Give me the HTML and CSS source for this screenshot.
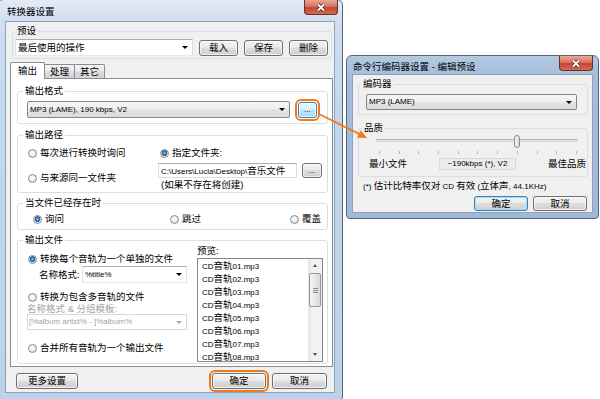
FILE: index.html
```html
<!DOCTYPE html>
<html lang="zh-CN">
<head>
    <meta charset="UTF-8">
    <meta name="viewport" content="width=device-width, initial-scale=1.0">
    <title>转换器设置</title>
    <link rel="stylesheet" href="styles.css">
</head>
<body>
<div class="desktop">

    <!-- main dialog -->
    <div class="win win-main">
        <div class="titlebar">
            <span class="title">转换器设置</span>
            <span class="close">
                <svg width="10" height="9" viewBox="0 0 10 9"><path d="M2 1.5l6 6M8 1.5l-6 6" stroke="#4a2620" stroke-width="3.4"/><path d="M2 1.5l6 6M8 1.5l-6 6" stroke="#fff" stroke-width="1.8"/></svg>
            </span>
        </div>
        <div class="client">
            <fieldset class="group preset">
                <legend>预设</legend>
                <div class="group-body row">
                    <div class="combo edit">最后使用的操作<i class="caret"></i></div>
                    <button class="btn">载入</button>
                    <button class="btn">保存</button>
                    <button class="btn">删除</button>
                </div>
            </fieldset>

            <div class="tabs">
                <div class="tabstrip">
                    <span class="tab active">输出</span>
                    <span class="tab">处理</span>
                    <span class="tab">其它</span>
                </div>
                <div class="tabpanel">
                    <fieldset class="group g-format">
                        <legend>输出格式</legend>
                        <div class="group-body row">
                            <div class="combo list"><span class="en">MP3 (LAME), 190 kbps, V2</span><i class="caret"></i></div>
                            <button class="btn dots hover marked"><span class="en">...</span></button>
                        </div>
                    </fieldset>

                    <fieldset class="group g-path">
                        <legend>输出路径</legend>
                        <div class="group-body">
                            <div class="path-left">
                                <label class="radio"><i></i>每次进行转换时询问</label>
                                <label class="radio"><i></i>与来源同一文件夹</label>
                            </div>
                            <div class="path-right">
                                <label class="radio on"><i></i>指定文件夹:</label>
                                <div class="path-row">
                                    <div class="textbox"><span class="en">C:\Users\Lucia\Desktop\</span>音乐文件</div>
                                    <button class="btn dots"><span class="en">...</span></button>
                                </div>
                                <div class="hint">(如果不存在将创建)</div>
                            </div>
                        </div>
                    </fieldset>

                    <fieldset class="group g-exist">
                        <legend>当文件已经存在时</legend>
                        <div class="group-body">
                            <label class="radio on"><i></i>询问</label>
                            <label class="radio"><i></i>跳过</label>
                            <label class="radio"><i></i>覆盖</label>
                        </div>
                    </fieldset>

                    <fieldset class="group g-files">
                        <legend>输出文件</legend>
                        <div class="group-body">
                            <div class="files-left">
                                <label class="radio on"><i></i>转换每个音轨为一个单独的文件</label>
                                <div class="name-row">
                                    <span class="name-label">名称格式:</span>
                                    <div class="combo edit"><span class="en">%title%</span><i class="caret"></i></div>
                                </div>
                                <label class="radio second"><i></i>转换为包含多音轨的文件</label>
                                <div class="sub-label">名称格式 &amp; 分组模板:</div>
                                <div class="combo off"><span class="en">[%album artist% - ]%album%</span><i class="caret"></i></div>
                                <label class="radio third"><i></i>合并所有音轨为一个输出文件</label>
                            </div>
                            <div class="preview">
                                <div>预览:</div>
                                <div class="listbox">
                                    <ul>
                                        <li><span class="en">CD</span>音轨<span class="en">01.mp3</span></li>
                                        <li><span class="en">CD</span>音轨<span class="en">02.mp3</span></li>
                                        <li><span class="en">CD</span>音轨<span class="en">03.mp3</span></li>
                                        <li><span class="en">CD</span>音轨<span class="en">04.mp3</span></li>
                                        <li><span class="en">CD</span>音轨<span class="en">05.mp3</span></li>
                                        <li><span class="en">CD</span>音轨<span class="en">06.mp3</span></li>
                                        <li><span class="en">CD</span>音轨<span class="en">07.mp3</span></li>
                                        <li><span class="en">CD</span>音轨<span class="en">08.mp3</span></li>
                                    </ul>
                                    <div class="scrollbar">
                                        <span class="sb-btn"><i class="up"></i></span>
                                        <span class="sb-thumb"><i></i><i></i><i></i></span>
                                        <span class="sb-track"></span>
                                        <span class="sb-btn"><i class="down"></i></span>
                                    </div>
                                </div>
                            </div>
                        </div>
                    </fieldset>
                </div>
            </div>

            <div class="footer">
                <button class="btn btn-more">更多设置</button>
                <button class="btn btn-ok marked">确定</button>
                <button class="btn btn-cancel">取消</button>
            </div>
        </div>
    </div>

    <!-- encoder preset dialog -->
    <div class="win win-sub">
        <div class="titlebar">
            <span class="title">命令行编码器设置 - 编辑预设</span>
            <span class="close">
                <svg width="10" height="9" viewBox="0 0 10 9"><path d="M2 1.5l6 6M8 1.5l-6 6" stroke="#4a2620" stroke-width="3.4"/><path d="M2 1.5l6 6M8 1.5l-6 6" stroke="#fff" stroke-width="1.8"/></svg>
            </span>
        </div>
        <div class="client">
            <fieldset class="group g-encoder">
                <legend>编码器</legend>
                <div class="group-body">
                    <div class="combo list"><span class="en">MP3 (LAME)</span><i class="caret"></i></div>
                </div>
            </fieldset>

            <fieldset class="group g-quality">
                <legend>品质</legend>
                <div class="group-body">
                    <div class="slider">
                        <span class="track"></span>
                        <span class="thumb" style="left: 70%"></span>
                    </div>
                    <div class="ticks">
                        <i></i><i></i><i></i><i></i><i></i><i></i><i></i><i></i><i></i><i></i><i></i>
                    </div>
                    <div class="scale-row">
                        <span>最小文件</span>
                        <span class="value en">~190kbps (*), V2</span>
                        <span>最佳品质</span>
                    </div>
                </div>
            </fieldset>

            <div class="note"><span class="en">(*) </span>估计比特率仅对<span class="en"> CD </span>有效<span class="en"> (</span>立体声<span class="en">, 44.1KHz)</span></div>

            <div class="sub-buttons">
                <button class="btn default">确定</button>
                <button class="btn">取消</button>
            </div>
        </div>
    </div>

    <svg class="arrow" width="600" height="399" viewBox="0 0 600 399">
        <line x1="319" y1="114" x2="360" y2="134.4" stroke="#f27a1c" stroke-width="1.8"/>
        <polygon points="367,138 357,137.8 360.8,130.3" fill="#f27a1c"/>
    </svg>
</div>
</body>
</html>
```

FILE: styles.css
```css
* {
    box-sizing: border-box;
}

body {
    margin: 0;
    background-color: #fff;
    font-family: "Liberation Sans", "Noto Sans CJK SC", sans-serif;
    font-size: 9.5px;
    line-height: 12px;
    color: #000;
}

.desktop {
    position: relative;
    width: 600px;
    height: 399px;
    overflow: hidden;
}

.en {
    font-size: 8px;
}

/* window frames */
.win {
    position: absolute;
    display: flex;
    flex-direction: column;
    border: 1px solid #56647a;
    border-radius: 6px 6px 4px 4px;
}

.win-main {
    left: -3px;
    top: -1px;
    width: 346px;
    height: 402px;
    background: linear-gradient(#e3ebf5, #cfdef0 22px, #c3d7ed 120px, #bcd2ea);
}

.win-sub {
    left: 346px;
    top: 55px;
    width: 253px;
    height: 164px;
    background: linear-gradient(#b4c9e2, #a4bddb 20px, #9fb9d8);
}

.titlebar {
    display: flex;
    justify-content: space-between;
    align-items: flex-start;
    flex-shrink: 0;
}

.win-main .titlebar {
    height: 21px;
    padding: 0 4px 0 9px;
}

.win-main .title {
    padding-top: 6px;
}

.win-sub .titlebar {
    height: 18px;
    padding: 0 5px 0 6px;
}

.win-sub .title {
    padding-top: 5px;
}

.close {
    width: 34px;
    height: 15px;
    display: flex;
    align-items: center;
    justify-content: center;
    border: 1px solid #6e2b20;
    border-top: none;
    border-radius: 0 0 4px 4px;
    background: linear-gradient(#e8a797, #d77663 45%, #c4452d 55%, #d26d57);
}

.client {
    flex: 1;
    display: flex;
    flex-direction: column;
    background-color: #f0f0f0;
    border: 1px solid #8ea2bb;
}

.win-main .client {
    margin: 0 7px 7px;
}

.win-sub .client {
    margin: 0 5px 5px;
}

/* group boxes */
.group {
    margin: 0;
    padding: 0;
    min-width: 0;
    border: 1px solid #d5dfe5;
    border-radius: 3px;
}

.group legend {
    padding: 0 2px;
    margin-left: 5px;
    line-height: 12px;
}

.row {
    display: flex;
    align-items: center;
}

/* controls */
.btn {
    height: 16px;
    padding: 0;
    font: inherit;
    color: #000;
    border: 1px solid #707070;
    border-radius: 3px;
    background: linear-gradient(#f2f2f2, #ebebeb 45%, #dddddd 50%, #cfcfcf);
    box-shadow: inset 0 0 0 1px rgba(255, 255, 255, 0.7);
}

.btn.hover {
    border-color: #3c7fb1;
    background: linear-gradient(#eaf6fd, #d9f0fc 45%, #bee6fd 50%, #a7d9f5);
}

.btn.default {
    border-color: #3c7fb1;
    box-shadow: inset 0 0 0 1px #a6def7;
}

.marked {
    outline: 2px solid #f27a1c;
    outline-offset: 1px;
}

.dots {
    line-height: 10px;
}

.combo {
    display: flex;
    align-items: center;
    height: 17px;
    padding-left: 2px;
    border: 1px solid #8e8f8f;
    border-radius: 2px;
    white-space: nowrap;
}

.combo.edit {
    background-color: #fff;
    border-color: #abadb3 #dbdfe6 #e3e9ef #e2e3ea;
    border-radius: 0;
}

.combo.list {
    background: linear-gradient(#f5f5f5, #eeeeee 50%, #e4e4e4 50%, #dcdcdc);
    border-color: #868686;
}

.combo.off {
    height: 16px;
    padding-left: 1px;
    color: #a3a3a3;
    background-color: #fff;
    border-color: #d9d9d9;
    border-radius: 0;
}

.caret {
    margin-left: auto;
    margin-right: 4px;
    border-left: 3px solid transparent;
    border-right: 3px solid transparent;
    border-top: 3.5px solid #000;
}

.combo.off .caret {
    border-top-color: #a9a9a9;
}

.textbox {
    height: 15px;
    padding-left: 2px;
    background-color: #fff;
    border: 1px solid #dadde3;
    border-top-color: #abadb3;
    line-height: 13px;
    white-space: nowrap;
    overflow: hidden;
}

.radio {
    display: flex;
    align-items: center;
    gap: 3px;
    white-space: nowrap;
}

.radio i {
    width: 9px;
    height: 9px;
    flex-shrink: 0;
    border-radius: 50%;
    border: 1px solid #8b8b8b;
    background: radial-gradient(circle at 45% 40%, #ffffff, #f0f0f0 40%, #d2d2d2);
}

.radio.on i {
    background: radial-gradient(circle at 50% 45%, #9fd3f7 0, #3b86cf 1.4px, #1c5a98 2.6px, #f4f4f4 3.2px, #d8d8d8);
}

/* main dialog */
.preset {
    margin: 3px 2px 0 6px;
}

.preset legend {
    margin-left: 2px;
}

.preset .group-body {
    gap: 6px;
    padding: 2px 3px 2px 2px;
}

.preset .combo {
    flex: 1;
}

.preset .btn {
    width: 39px;
}

.tabs {
    display: flex;
    flex-direction: column;
    margin: 3px 1px 0 4px;
}

.tabstrip {
    display: flex;
    align-items: flex-end;
    height: 16px;
}

.tab {
    width: 31px;
    height: 14px;
    margin-left: -1px;
    padding-top: 1px;
    text-align: center;
    border: 1px solid #898c95;
    border-bottom: none;
    border-radius: 2px 2px 0 0;
    background: linear-gradient(#f3f3f3, #ebebeb 50%, #dddddd 50%, #d3d3d3);
}

.tab.active {
    position: relative;
    z-index: 1;
    width: 35px;
    height: 17px;
    margin: 0 0 -1px;
    padding-top: 2px;
    background: #fff;
}

.tabpanel {
    background-color: #fff;
    border: 1px solid #898c95;
    padding: 0 4px 2px 6px;
}

.g-format {
    margin-top: 6px;
}

.g-format .group-body {
    gap: 8px;
    padding: 4px 10px 5px 9px;
}

.g-format .combo {
    flex: 1;
}

.g-format .dots {
    width: 19px;
}

.g-path {
    margin-top: 5px;
}

.g-path .group-body {
    display: flex;
    padding: 6px 5px 1px 10px;
}

.path-left {
    width: 130px;
}

.path-left .radio + .radio {
    margin-top: 13px;
}

.path-right {
    flex: 1;
}

.path-right > .radio {
    margin-left: 2px;
}

.path-row {
    display: flex;
    gap: 5px;
    margin-top: 4px;
}

.path-row .textbox {
    width: 139px;
}

.path-row .dots {
    width: 20px;
    height: 15px;
}

.hint {
    margin-top: 1px;
    padding-left: 3px;
}

.g-exist {
    margin-top: 4px;
}

.g-exist .group-body {
    display: grid;
    grid-template-columns: 137px 120px auto;
    padding: 4px 0 4px 15px;
}

.g-files {
    margin-top: 4px;
}

.g-files .group-body {
    display: grid;
    grid-template-columns: 170px 126px;
    align-items: start;
    padding: 7px 4px 1px 9px;
}

.files-left > .radio {
    padding-left: 1px;
}

.name-row {
    display: flex;
    align-items: center;
    margin-top: 1px;
    padding-left: 12px;
}

.name-label {
    width: 43px;
}

.name-row .combo {
    width: 105px;
}

.files-left .second {
    margin-top: 8px;
}

.sub-label {
    color: #a3a3a3;
    line-height: 11px;
}

.files-left .combo.off {
    width: 160px;
}

.files-left .third {
    margin-top: 12px;
}

.preview {
    margin-top: -8px;
}

.listbox {
    display: flex;
    height: 104px;
    margin-top: 1px;
    overflow: hidden;
    background-color: #fff;
    border: 1px solid #828790;
}

.listbox ul {
    flex: 1;
    margin: 0;
    padding: 0 0 0 4px;
    list-style: none;
}

.listbox li {
    height: 13px;
    line-height: 13px;
    white-space: nowrap;
}

.scrollbar {
    width: 14px;
    display: flex;
    flex-direction: column;
    background: linear-gradient(90deg, #e4e4e4, #f3f3f3 40%, #f0f0f0);
}

.sb-btn {
    height: 13px;
    display: flex;
    align-items: center;
    justify-content: center;
}

.sb-btn i {
    border-left: 2.5px solid transparent;
    border-right: 2.5px solid transparent;
}

.sb-btn .up {
    border-bottom: 3px solid #505050;
}

.sb-btn .down {
    border-top: 3px solid #505050;
}

.sb-thumb {
    height: 34px;
    margin: 1px 1px 0;
    display: flex;
    flex-direction: column;
    align-items: center;
    justify-content: center;
    gap: 1px;
    border: 1px solid #979797;
    border-radius: 2px;
    background: linear-gradient(90deg, #f5f5f5, #e8e8e8 50%, #d8d8d8);
}

.sb-thumb i {
    width: 5px;
    height: 1px;
    background-color: #8a8a8a;
}

.sb-track {
    flex: 1;
}

.footer {
    display: flex;
    margin: 6px 7px 0 10px;
}

.btn-more {
    width: 62px;
}

.btn-ok {
    width: 54px;
    margin-left: auto;
}

.btn-cancel {
    width: 55px;
    margin-left: 6px;
}

/* encoder dialog */
.g-encoder {
    margin: 3px 4px 0 5px;
}

.g-encoder legend {
    margin-left: 2px;
}

.g-encoder .group-body {
    padding: 4px 10px 4px 7px;
}

.g-encoder .combo {
    height: 16px;
}

.g-quality {
    margin: 7px 4px 0 5px;
}

.g-quality legend {
    margin-left: 3px;
}

.g-quality .group-body {
    padding-bottom: 6px;
}

.slider {
    position: relative;
    height: 15px;
    margin: 0 9px 0 17px;
}

.slider .track {
    position: absolute;
    left: 0;
    right: 0;
    top: 5px;
    height: 3px;
    background-color: #e7eaea;
    border: 1px solid #d6d6d6;
    border-top-color: #b0b0b0;
}

.slider .thumb {
    position: absolute;
    top: 1px;
    width: 6px;
    height: 13px;
    margin-left: -3px;
    border: 1px solid #8b8b8b;
    border-radius: 3px;
    background: linear-gradient(90deg, #f7f7f7, #dcdcdc);
}

.ticks {
    display: flex;
    justify-content: space-between;
    height: 3px;
    margin: 2px 10px 0 20px;
}

.ticks i {
    width: 1px;
    background-color: #b9b9b9;
}

.scale-row {
    display: flex;
    justify-content: space-between;
    align-items: center;
    height: 13px;
    margin-top: 3px;
    padding: 0 1px 0 10px;
}

.scale-row .value {
    width: 77px;
    height: 12px;
    line-height: 10px;
    text-align: center;
    background-color: #ececec;
    border: 1px solid #d9d9d9;
}

.note {
    margin-top: 3px;
    padding-left: 10px;
    white-space: nowrap;
}

.sub-buttons {
    display: flex;
    justify-content: flex-end;
    gap: 5px;
    margin-top: 3px;
    padding-right: 5px;
}

.sub-buttons .btn {
    width: 54px;
    height: 15px;
}

.arrow {
    position: absolute;
    left: 0;
    top: 0;
    pointer-events: none;
}
```
